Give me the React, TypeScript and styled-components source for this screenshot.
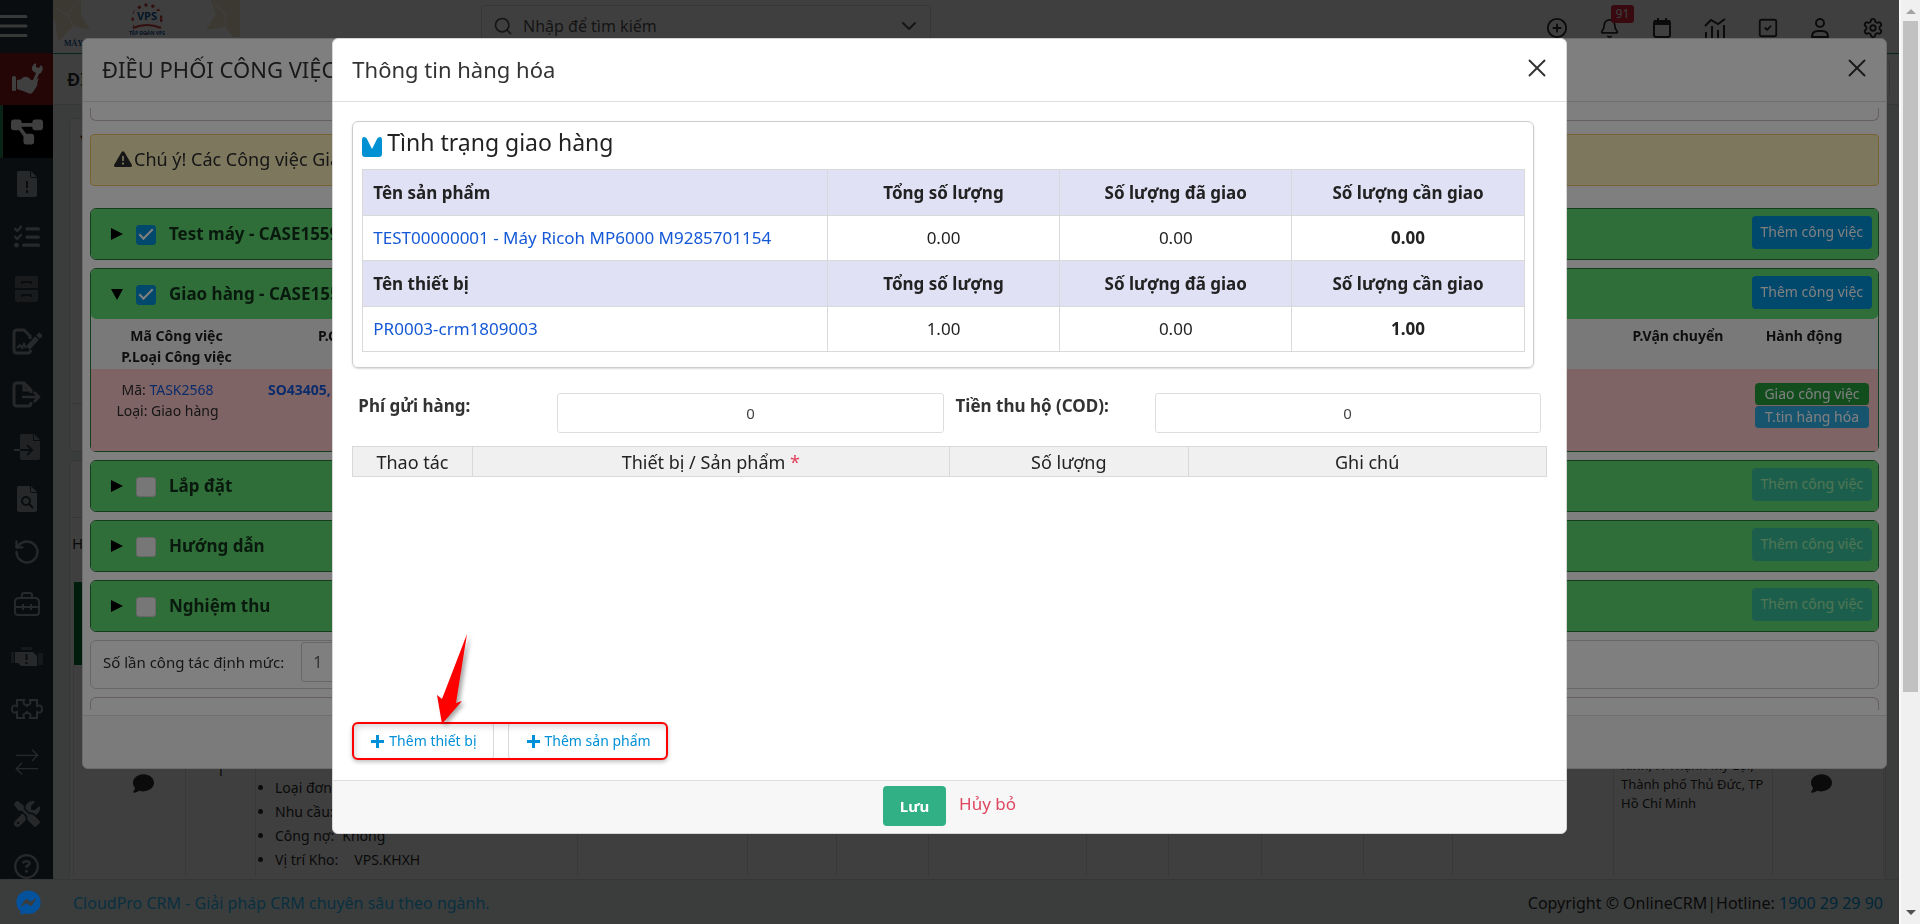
import React from "react";
import styled, { createGlobalStyle, css } from "styled-components";
import {
  ArrowRightLeft,
  Bell,
  ChevronDown,
  CirclePlus,
  RotateCcw,
  Search,
  Settings,
  SquareCheck,
  X,
} from "lucide-react";
import {
  FaComment,
  FaDiagramProject,
  FaFacebookMessenger,
  FaListCheck,
  FaRegCircleQuestion,
  FaScrewdriverWrench,
  FaTriangleExclamation,
} from "react-icons/fa6";

const GlobalStyle = createGlobalStyle`
  *, *::before, *::after { box-sizing: border-box; }
  body {
    margin: 0;
    overflow: hidden;
    background: #eff5f3;
    color: #2c2c2c;
    font-family: "Noto Sans", "Open Sans", sans-serif;
    font-size: 16px;
    line-height: 24px;
  }
  button, input { font: inherit; }
  a { color: #1558d6; text-decoration: none; }
  h1, h2, h3, p, ul { margin: 0; padding: 0; }
  svg { display: block; flex: none; }
`;

/* ---------- window frame ---------- */

const Window = styled.div`
  display: flex;
  height: 100vh;
`;

const Page = styled.div`
  flex: 1;
  min-width: 0;
  display: flex;
  flex-direction: column;
`;

const ScrollTrack = styled.div`
  position: relative;
  z-index: 30;
  width: 21px;
  display: flex;
  flex-direction: column;
  align-items: center;
  justify-content: space-between;
  padding: 9px 2px;
  background: #f0f0f0;
  border-left: 2px solid #f8f8f8;
`;

const ScrollThumb = styled.div`
  flex: 1;
  align-self: stretch;
  margin: 7px 0 218px;
  background: #c1c1c1;
`;

const ScrollArrow = styled.div<{ $down?: boolean }>`
  border: 5px solid transparent;
  ${(p) =>
    p.$down
      ? css`border-top-color: #505050; border-bottom: 0;`
      : css`border-bottom-color: #a3a3a3; border-top: 0;`}
`;

/* ---------- page behind the dialogs ---------- */

const Upper = styled.div`
  flex: 1;
  min-height: 0;
  display: flex;
`;

const Sidebar = styled.nav`
  width: 53px;
  overflow: hidden;
  background: #28343f;
`;

const SideItem = styled.button<{ $kind?: "menu" | "brand" | "active"; $short?: boolean }>`
  display: flex;
  align-items: center;
  justify-content: center;
  width: 53px;
  height: ${(p) => (p.$short ? 52 : 53)}px;
  padding: 0;
  border: 0;
  border-left: 3px solid transparent;
  border-right: 3px solid transparent;
  background: transparent;
  color: #99a0a4;
  ${(p) => p.$kind === "menu" && css`justify-content: flex-start; border: 0; padding-bottom: 1px; color: #dde0e0;`}
  ${(p) => p.$kind === "brand" && css`background: #901919; border-color: #901919; color: #fff;`}
  ${(p) => p.$kind === "active" && css`background: #000; border-color: #000; border-left-color: #2b8c5c; color: #fff;`}
`;

const PageColumn = styled.div`
  flex: 1;
  min-width: 0;
  display: flex;
  flex-direction: column;
`;

const TopBar = styled.header`
  display: flex;
  align-items: flex-start;
  height: 54px;
  background: #fff;
  border-bottom: 1px solid #1d9a6c;
`;

const LogoBox = styled.div`
  width: 190px;
`;

const SearchBox = styled.label`
  display: flex;
  align-items: center;
  gap: 10px;
  width: 450px;
  height: 42px;
  margin: 5px auto 0 238px;
  padding: 0 9px 0 11px;
  border: 1px solid #dcdcdc;
  border-radius: 4px;
  color: #555;
`;

const SearchInput = styled.input`
  flex: 1;
  min-width: 0;
  border: 0;
  padding: 0;
  background: transparent;
  color: #333;
  &::placeholder { color: #555; opacity: 1; }
`;

const TopIcons = styled.div`
  display: flex;
  width: 368px;
  padding: 16px 0 0;
`;

const TopIcon = styled.button`
  position: relative;
  display: flex;
  flex: 1;
  justify-content: center;
  align-items: center;
  height: 24px;
  padding: 0;
  border: 0;
  background: none;
  color: #2c2c2c;
`;

const Badge = styled.span`
  position: absolute;
  left: 27px;
  top: -11px;
  height: 18px;
  padding: 0 5px;
  border-radius: 3px;
  background: #e0253c;
  color: #fff;
  font-size: 12px;
  line-height: 18px;
`;

const Crumbs = styled.div`
  display: flex;
  align-items: center;
  justify-content: space-between;
  height: 51px;
  padding: 0 9px 0 14px;
  background: #fff;
  border-bottom: 1px solid #dcdcdc;
  font-size: 18px;
  font-weight: 600;
`;

const CrumbTools = styled.div`
  width: 160px;
  height: 38px;
  border: 1px solid #dcdcdc;
  border-radius: 4px;
`;

const Content = styled.main`
  flex: 1;
  min-height: 0;
  display: flex;
  flex-direction: column;
  gap: 8px;
  padding: 13px 13px 0 16px;
`;

const PageCard = styled.section<{ $grow?: boolean }>`
  display: flex;
  flex-direction: column;
  min-height: 0;
  border: 1px solid #dcdcdc;
  border-radius: 6px;
  background: #fff;
  ${(p) => (p.$grow ? css`flex: 1; border-bottom: 0; border-radius: 6px 6px 0 0;` : css`height: 334px;`)}
`;

const CardLine = styled.div<{ $h: number }>`
  height: ${(p) => p.$h}px;
  margin-left: 2px;
  padding: 7px 0 0 8px;
  border-bottom: 1px solid #dcdcdc;
`;

const JobsHead = styled.div`
  padding: 13px 2px 27px;
  font-size: 15px;
`;

const Jobs = styled.table`
  width: calc(100% - 5px);
  margin-left: 3px;
  border-collapse: collapse;
  table-layout: fixed;
  font-size: 14px;
  th { height: 83px; background: #007328; }
  td {
    height: 211px;
    padding: 91px 7px 0;
    border: solid #e0e0e0;
    border-width: 0 1px;
    vertical-align: top;
    line-height: 19px;
  }
`;

const JobStatus = styled.div<{ $last?: boolean }>`
  display: flex;
  flex-direction: column;
  align-items: center;
  gap: 4px;
  padding-right: ${(p) => (p.$last ? 22 : 0)}px;
  &::before {
    content: "";
    width: 73px;
    height: 13px;
    border-radius: 4px;
    background: #259f3c;
  }
  svg { margin-left: ${(p) => (p.$last ? 8 : 28)}px; }
`;

const JobNumber = styled.div`
  padding-top: 5px;
  text-align: center;
`;

const JobNotes = styled.ul`
  padding: 20px 0 0 12px;
  line-height: 23px;
  li + li { margin-top: 1px; }
  span { padding-left: 8px; }
  li:last-child span { padding-left: 16px; }
`;

const JobAddress = styled.p`
  font-size: 13px;
  white-space: nowrap;
`;

const Footer = styled.footer`
  display: flex;
  align-items: center;
  height: 45px;
  padding: 1px 16px 0;
  border-top: 1px solid #dcdcdc;
  background: #eff5f3;
`;

const ChatButton = styled.button`
  position: relative;
  z-index: 30;
  margin-right: 32px;
  padding: 0;
  border: 0;
  background: none;
  color: #04529b;
`;

const FooterLink = styled.a<{ $soft?: boolean }>`
  color: ${(p) => (p.$soft ? "#28c0ff" : "#0098e0")};
`;

const Copyright = styled.span`
  margin-left: auto;
`;

/* ---------- dialogs ---------- */

const Backdrop = styled.div<{ $level: 1 | 2 }>`
  position: fixed;
  inset: 0 21px 0 0;
  z-index: ${(p) => p.$level * 10};
  display: flex;
  align-items: flex-start;
  justify-content: center;
  padding: ${(p) => (p.$level === 1 ? "38px 12px 0 82px" : "38px 0 0")};
  background: rgba(0, 0, 0, 0.5);
`;

const Dialog = styled.section<{ $width: string }>`
  width: ${(p) => p.$width};
  overflow: hidden;
  border: 1px solid #d6d6d6;
  border-radius: 6px;
  background: #fff;
`;

const DialogHead = styled.header`
  display: flex;
  align-items: center;
  justify-content: space-between;
  height: 63px;
  padding: 0 14px 2px 19px;
  border-bottom: 1px solid #dedede;
`;

const DialogTitle = styled.h2`
  font-size: 22px;
  line-height: 32px;
  font-weight: 400;
  white-space: nowrap;
  color: #333;
`;

const CloseButton = styled.button`
  padding: 0 0 3px;
  border: 0;
  background: none;
  color: #333;
`;

const DialogFoot = styled.footer`
  display: flex;
  justify-content: center;
  gap: 13px;
  height: 53px;
  padding: 5px 0 0;
  border-top: 1px solid #dedede;
  background: #f7f7f7;
`;

const PlanBody = styled.div`
  display: flex;
  flex-direction: column;
  gap: 8px;
  padding: 6px 7px 5px;
`;

const Stub = styled.div<{ $end?: boolean }>`
  height: 13px;
  border: 1px solid #cdbfc2;
  ${(p) =>
    p.$end
      ? css`border-bottom: 0; border-radius: 6px 6px 0 0;`
      : css`border-top: 0; border-radius: 0 0 6px 6px; margin-bottom: 5px;`}
`;

const Notice = styled.p`
  display: flex;
  align-items: center;
  gap: 2px;
  height: 52px;
  margin-bottom: 14px;
  padding: 0 23px 2px;
  border: 1px solid #f3c565;
  border-radius: 4px;
  background: #fbefbd;
  font-size: 18px;
  white-space: nowrap;
`;

const Group = styled.section`
  border: 1px solid #2b7c3e;
  border-radius: 6px;
  background: #fff;
`;

const GroupHead = styled.header`
  display: flex;
  align-items: center;
  height: 50px;
  padding: 0 6px 0 20px;
  border-radius: 5px;
  background: #5edc70;
`;

const Caret = styled.span<{ $open?: boolean }>`
  width: 25px;
  &::before {
    content: "";
    display: block;
    width: 0;
    height: 0;
    border: 6px solid transparent;
    ${(p) =>
      p.$open
        ? css`border-top: 11px solid #000; border-bottom: 0;`
        : css`border-left: 12px solid #000; border-right: 0;`}
  }
`;

const GroupLabel = styled.label`
  display: flex;
  align-items: center;
  gap: 13px;
  color: #12331a;
  font-size: 17px;
  font-weight: 700;
  white-space: nowrap;
`;

const Tick = styled.input`
  appearance: none;
  width: 20px;
  height: 20px;
  margin: 2px 0 0;
  border: 1px solid #cfcfcf;
  border-radius: 3px;
  background: #efefef;
  &:checked {
    border-color: #0090d8;
    background: #0090d8;
  }
  &:checked::before {
    content: "";
    display: block;
    width: 14px;
    height: 7px;
    margin: 3px 0 0 2px;
    border: solid #fff;
    border-width: 0 0 2px 2px;
    transform: rotate(-45deg);
  }
`;

const AddTask = styled.button`
  height: 33px;
  margin: 0 0 4px auto;
  padding: 0 9px;
  border: 0;
  border-radius: 4px;
  background: #0090d8;
  color: #fff;
  font-size: 14px;
  &:disabled { opacity: 0.4; }
`;

const Tasks = styled.table`
  width: 100%;
  border-collapse: collapse;
  table-layout: fixed;
  font-size: 14px;
  line-height: 21px;
  text-align: center;
  th {
    height: 50px;
    padding: 6px 0 0;
    color: #1c1c1c;
    background: #f3f3f3;
    font-weight: 700;
    vertical-align: top;
  }
  td {
    height: 82px;
    padding: 10px 18px 0 0;
    background: #ffc8ca;
    vertical-align: top;
  }
  th:nth-child(2) { padding-left: 56px; text-align: left; }
  td:nth-child(2) { padding-left: 6px; text-align: left; }
  td:last-child { padding: 14px 0 0 16px; }
`;

const RowAction = styled.button<{ $tone: string }>`
  display: block;
  width: 114px;
  height: 23px;
  margin: 0 auto;
  padding: 0;
  border: 0;
  border-bottom: 1px solid #ffc8ca;
  border-radius: 4px;
  background: ${(p) => p.$tone};
  color: #fff;
  font-size: 14px;
  line-height: 22px;
`;

const Quota = styled.label`
  display: flex;
  align-items: center;
  gap: 17px;
  height: 49px;
  padding: 0 12px 5px;
  border: 1px solid #cfcfcf;
  border-radius: 6px;
  font-size: 15px;
`;

const QuotaInput = styled.input`
  width: 300px;
  height: 40px;
  padding: 0 11px;
  border: 1px solid #cfcfcf;
  border-radius: 3px;
  background: #fff;
  color: #666;
  font-size: 16px;
`;

/* ---------- goods dialog ---------- */

const GoodsBody = styled.div`
  padding: 19px 19px 20px;
`;

const StatusCard = styled.section`
  margin-right: 13px;
  padding: 0 8px 15px 9px;
  border: 1px solid #ccc;
  border-radius: 6px;
  box-shadow: 0 1px 2px rgba(0, 0, 0, 0.15);
`;

const StatusTitle = styled.h3`
  display: flex;
  align-items: center;
  gap: 5px;
  height: 47px;
  padding-bottom: 7px;
  font-size: 23px;
  font-weight: 400;
  color: #222;
  svg { margin-top: 9px; }
`;

const Grid = styled.table<{ $dense?: boolean }>`
  width: 100%;
  border-collapse: collapse;
  table-layout: fixed;
  text-align: center;
  color: #222;
  font-size: 17px;
  th, td {
    height: 45px;
    padding: 0 10px;
    border: 1px solid #d9d9d9;
    font-weight: 400;
  }
  th { height: 46px; background: #e1e1f6; font-weight: 700; }
  td:last-child { font-weight: 700; }
  th:first-child, td:first-child { text-align: left; }
  ${(p) =>
    p.$dense &&
    css`
      font-size: 18px;
      && th { height: 30px; background: #f0f0f0; font-weight: 400; text-align: center; }
    `}
`;

const Fees = styled.div`
  display: grid;
  grid-template-columns: 1fr 2fr 1fr 2fr;
  margin: 25px 0 13px;
`;

const FeeLabel = styled.label`
  padding: 1px 6px;
  font-size: 17px;
  font-weight: 700;
  color: #333;
  white-space: nowrap;
`;

const FeeCell = styled.div`
  padding: 0 6px;
`;

const FeeInput = styled.input`
  display: block;
  width: 100%;
  height: 40px;
  border: 1px solid #ddd;
  border-radius: 3px;
  color: #444;
  font-size: 15px;
  text-align: center;
`;

const Required = styled.span`
  color: #e0405a;
`;

const Lines = styled.div`
  min-height: 276px;
`;

const AddButtons = styled.div`
  position: relative;
  display: flex;
  gap: 14px;
  width: max-content;
`;

const AddButton = styled.button`
  display: flex;
  align-items: center;
  gap: 5px;
  height: 38px;
  padding: 0 16px 0 18px;
  border: 1px solid #d9d9d9;
  border-radius: 4px;
  background: #fff;
  color: #0090d8;
  font-size: 14px;
`;

const Highlight = styled.div`
  position: absolute;
  inset: 0;
  border: 2px solid #f00;
  border-radius: 6px;
  box-shadow: 0 2px 4px rgba(0, 0, 0, 0.25), inset 2px 3px 6px rgba(0, 0, 0, 0.15);
  pointer-events: none;
`;

const Pointer = styled.svg`
  position: absolute;
  left: 80px;
  bottom: 36px;
  filter: drop-shadow(3px 2px 2px rgba(0, 0, 0, 0.35));
`;

const SaveButton = styled.button`
  width: 63px;
  height: 40px;
  padding: 0;
  border: 0;
  border-radius: 4px;
  background: #31b085;
  color: #fff;
  font-size: 15px;
  font-weight: 700;
`;

const CancelButton = styled.button`
  align-self: flex-start;
  padding: 6px 0;
  border: 0;
  background: none;
  color: #df4660;
  font-size: 17px;
`;

/* ---------- drawings ---------- */

const MenuIcon = () => (
  <svg width="28" height="24" viewBox="0 0 28 24" stroke="currentColor" strokeWidth="3" strokeLinecap="round">
    <path d="M0 2.500H26M0 12H26M0 21.500H26" />
  </svg>
);

const HandWrenchIcon = () => (
  <svg width="32" height="32" viewBox="0 0 32 32" fill="currentColor">
    <rect x="1" y="13" width="4" height="15" rx="1.500" />
    <path d="M6 17Q10 17 12 14.500Q15 13 18 15L20 17H25L28 15Q26 19 26 23L22 29Q20 32 17 30L12 28L6 26Z" />
    <path d="M22 17L25 10Q20 8 21 4Q22 1 25 0L25 4L28 5L30 2Q33 5 31 8Q30 11 28 11L25 18Z" />
  </svg>
);

const FileBase = ({ children }: { children: React.ReactNode }) => (
  <svg width="20" height="26" viewBox="0 0 20 26">
    <path d="M2 0H13V5Q13 7 15 7H20V24Q20 26 18 26H2Q0 26 0 24V2Q0 0 2 0ZM14 0L20 6H14Z" fill="currentColor" />
    <g fill="none" stroke="#28343f" strokeWidth="2">
      {children}
    </g>
  </svg>
);

const CabinetIcon = () => (
  <svg width="23" height="26" viewBox="0 0 23 26">
    <path d="M2 0H21Q23 0 23 2V12H0V2Q0 0 2 0ZM0 14H23V24Q23 26 21 26H2Q0 26 0 24Z" fill="currentColor" opacity=".5" />
    <path d="M7 8V6H16V8M7 21V19H16V21" fill="none" stroke="#28343f" strokeWidth="2" />
  </svg>
);

const SignIcon = () => (
  <svg width="30" height="27" viewBox="0 0 30 27" fill="none" stroke="currentColor" strokeWidth="3">
    <path d="M19 22Q18 25 16 25H5Q2 25 2 22V5Q2 2 5 2H12L18 8V11" />
    <path d="M5 20L8 17L10 20L12 16L14 20" strokeWidth="2" />
    <path d="M16 20L25 10" strokeWidth="5" />
    <path d="M26 9L29 6" strokeWidth="5" />
  </svg>
);

const ExportIcon = () => (
  <svg width="30" height="27" viewBox="0 0 30 27" fill="none" stroke="currentColor" strokeWidth="3">
    <path d="M19 21V22Q19 25 16 25H5Q2 25 2 22V5Q2 2 5 2H12L19 9V12M12 2V9H19" />
    <path d="M10 16H27M22 11L27 16L22 21" strokeWidth="2.500" />
  </svg>
);

const ImportIcon = () => (
  <svg width="26" height="26" viewBox="0 0 26 26">
    <path d="M8 0H19V7H26V24Q26 26 24 26H8Q6 26 6 24V2Q6 0 8 0ZM20 0L26 6H20Z" fill="currentColor" opacity=".8" />
    <path d="M6 16H18M13 11L18 16L13 21" fill="none" stroke="#28343f" strokeWidth="2" />
    <path d="M0 16H6" stroke="currentColor" strokeWidth="2" />
  </svg>
);

const ToolboxIcon = () => (
  <svg width="26" height="24" viewBox="0 0 26 24" fill="none" stroke="currentColor" strokeWidth="2">
    <path d="M1 10Q1 6 5 6H21Q25 6 25 10V20Q25 23 22 23H4Q1 23 1 20ZM8 6V3Q8 1 10 1H16Q18 1 18 3V6M1 15H25M9 12V18M17 12V18" />
  </svg>
);

const EngineIcon = () => (
  <svg width="32" height="20" viewBox="0 0 32 20">
    <path d="M10 0H21V3H10ZM0 5H3V16H0ZM27 6H32V18H27Z" fill="currentColor" opacity=".45" />
    <path d="M4 5H22L26 9V19H10L7 16H4Z" fill="currentColor" />
    <path d="M15.500 7V13M15.500 15V17" stroke="#28343f" strokeWidth="2" />
  </svg>
);

const PuzzleIcon = () => (
  <svg width="32" height="20" viewBox="0 0 32 20" fill="none" stroke="currentColor" strokeWidth="2">
    <path d="M6 1H13Q11 6 16 6Q21 6 19 1H26V7Q31 5 31 10Q31 15 26 13V19H19Q21 14 16 14Q11 14 13 19H6V13Q1 15 1 10Q1 5 6 7Z" />
    <path d="M16 6V8M16 12V14" />
  </svg>
);

const CalendarIcon = () => (
  <svg width="18" height="20" viewBox="0 0 18 20" fill="none" stroke="currentColor" strokeWidth="2">
    <rect x="1" y="3" width="16" height="16" rx="2" />
    <path d="M1 4.500H17" strokeWidth="5" />
    <path d="M5 0V4M13 0V4" />
  </svg>
);

const ChartIcon = () => (
  <svg width="22" height="20" viewBox="0 0 22 20" fill="none" stroke="currentColor" strokeWidth="2">
    <path d="M1 8L7 2L14 6L21 1M2 20V14M8 20V8M14 20V12M20 20V7" />
  </svg>
);

const PersonIcon = () => (
  <svg width="18" height="20" viewBox="0 0 18 20" fill="none" stroke="currentColor" strokeWidth="2">
    <circle cx="9" cy="5" r="4" />
    <path d="M1 19Q1 13 7 13H11Q17 13 17 19Z" />
  </svg>
);

const PlusIcon = () => (
  <svg width="13" height="13" viewBox="0 0 13 13" stroke="currentColor" strokeWidth="3">
    <path d="M0 6.500H13M6.500 0V13" />
  </svg>
);

const Logo = () => (
  <svg width="190" height="51" viewBox="0 0 190 51">
    <path d="M0 0H28V14L37 30L20 26L5 42L2 20L0 22ZM158 0H187V37H180L172 27L153 30L163 14L158 2Z" fill="#f0e6cb" />
    <path d="M28 0L14 14L20 26M14 14L2 8M160 2L172 14L172 27" fill="none" stroke="#fff" strokeWidth="1" />
    <circle cx="94" cy="19" r="14" fill="none" stroke="#cc3a3a" strokeWidth="3" strokeDasharray="3 4" />
    <rect x="81" y="11" width="26" height="22" fill="#fff" />
    <text x="94" y="20" fill="#145a9c" fontSize="11" fontWeight="700" textAnchor="middle" fontFamily="Noto Sans, sans-serif">VPS</text>
    <path d="M80 28Q94 22 108 28" fill="none" stroke="#cc3a3a" strokeWidth="2" />
    <text x="94" y="35" fill="#145a9c" fontSize="5" fontWeight="700" textAnchor="middle" fontFamily="Noto Sans, sans-serif">TẬP ĐOÀN VPS</text>
    <text x="11" y="46" fill="#145a9c" fontSize="8" fontWeight="700" fontFamily="Liberation Serif, serif">MÁY</text>
  </svg>
);

const StatusIcon = () => (
  <svg width="20" height="20" viewBox="0 0 20 20">
    <path d="M2 0Q4 0 5 2L10 12L15 2Q16 0 18 0Q20 0 20 3V17Q20 20 17 20H3Q0 20 0 17V3Q0 0 2 0Z" fill="#0090d4" />
  </svg>
);

const sideIcons: [string, React.ReactNode][] = [
  ["Cảnh báo", <FileBase><path d="M10 10V17M10 19V22" /></FileBase>],
  ["Danh sách", <FaListCheck size={26} />],
  ["Lưu trữ", <CabinetIcon />],
  ["Ký", <SignIcon />],
  ["Xuất", <ExportIcon />],
  ["Nhập", <ImportIcon />],
  ["Tìm", <FileBase><circle cx="9" cy="15" r="4" /><path d="M12 18L16 22" /></FileBase>],
  ["Hoàn lại", <RotateCcw size={28} strokeWidth={2} />],
  ["Công cụ", <ToolboxIcon />],
  ["Động cơ", <EngineIcon />],
  ["Tiện ích", <PuzzleIcon />],
  ["Chuyển", <ArrowRightLeft size={32} strokeWidth={1} />],
  ["Cài đặt", <FaScrewdriverWrench size={26} />],
  ["Trợ giúp", <FaRegCircleQuestion size={25} />],
];

const jobColumns = [112, 70, 322, 170, 89, 92, 158, 82, 93, 102, 89, 161, 159, 111];

const goods = [
  { head: "Tên sản phẩm", name: "TEST00000001 - Máy Ricoh MP6000 M9285701154", total: "0.00", done: "0.00", left: "0.00" },
  { head: "Tên thiết bị", name: "PR0003-crm1809003", total: "1.00", done: "0.00", left: "1.00" },
];

function TaskGroup({ title, checked, children }: { title: string; checked?: boolean; children?: React.ReactNode }) {
  return (
    <Group>
      <GroupHead>
        <Caret $open={!!children} />
        <GroupLabel>
          <Tick type="checkbox" defaultChecked={checked} />
          {title}
        </GroupLabel>
        <AddTask disabled={!checked}>Thêm công việc</AddTask>
      </GroupHead>
      {children}
    </Group>
  );
}

function BackgroundPage() {
  return (
    <Page>
      <Upper>
        <Sidebar>
          <SideItem $kind="menu" aria-label="Menu"><MenuIcon /></SideItem>
          <SideItem $kind="brand" $short aria-label="Dịch vụ"><HandWrenchIcon /></SideItem>
          <SideItem $kind="active" aria-label="Điều phối"><FaDiagramProject size={32} /></SideItem>
          {sideIcons.map(([name, icon], i) => (
            <SideItem key={name} $short={i % 2 === 0} aria-label={name}>{icon}</SideItem>
          ))}
        </Sidebar>
        <PageColumn>
          <TopBar>
            <LogoBox><Logo /></LogoBox>
            <SearchBox>
              <Search size={20} strokeWidth={2} />
              <SearchInput placeholder="Nhập để tìm kiếm" aria-label="Tìm kiếm" />
              <ChevronDown size={24} strokeWidth={2} />
            </SearchBox>
            <TopIcons>
              <TopIcon aria-label="Thêm"><CirclePlus size={22} /></TopIcon>
              <TopIcon aria-label="Thông báo"><Bell size={21} /><Badge>91</Badge></TopIcon>
              <TopIcon aria-label="Lịch"><CalendarIcon /></TopIcon>
              <TopIcon aria-label="Báo cáo"><ChartIcon /></TopIcon>
              <TopIcon aria-label="Việc cần làm"><SquareCheck size={22} /></TopIcon>
              <TopIcon aria-label="Tài khoản"><PersonIcon /></TopIcon>
              <TopIcon aria-label="Cài đặt"><Settings size={22} /></TopIcon>
            </TopIcons>
          </TopBar>
          <Crumbs>ĐI<CrumbTools /></Crumbs>
          <Content>
            <PageCard><CardLine $h={285}>▾</CardLine></PageCard>
            <PageCard $grow>
              <CardLine $h={57} />
              <JobsHead>H</JobsHead>
              <Jobs>
                <colgroup>
                  {jobColumns.map((w, i) => <col key={i} style={{ width: w }} />)}
                </colgroup>
                <thead><tr>{jobColumns.map((_, i) => <th key={i} />)}</tr></thead>
                <tbody>
                  <tr>
                    <td><JobStatus><FaComment size={21} /></JobStatus></td>
                    <td><JobNumber>1</JobNumber></td>
                    <td>
                      <JobNotes>
                        <li>Loại đơn</li>
                        <li>Nhu cầu:</li>
                        <li>Công nợ:<span>Không</span></li>
                        <li>Vị trí Kho:<span>VPS.KHXH</span></li>
                      </JobNotes>
                    </td>
                    {jobColumns.slice(3, 12).map((_, i) => <td key={i} />)}
                    <td>
                      <JobAddress>
                        Kinh, P. Thạnh Mỹ Lợi,<br />Thành phố Thủ Đức, TP<br />Hồ Chí Minh
                      </JobAddress>
                    </td>
                    <td><JobStatus $last><FaComment size={21} /></JobStatus></td>
                  </tr>
                </tbody>
              </Jobs>
            </PageCard>
          </Content>
        </PageColumn>
      </Upper>
      <Footer>
        <ChatButton aria-label="Messenger"><FaFacebookMessenger size={25} /></ChatButton>
        <FooterLink href="#" $soft>CloudPro CRM - Giải pháp CRM chuyên sâu theo ngành.</FooterLink>
        <Copyright>
          Copyright © OnlineCRM|Hotline: <FooterLink href="#">1900 29 29 90</FooterLink>
        </Copyright>
      </Footer>
    </Page>
  );
}

function PlanDialog() {
  return (
    <Dialog $width="100%" role="dialog" aria-label="Điều phối công việc">
      <DialogHead>
        <DialogTitle>ĐIỀU PHỐI CÔNG VIỆC</DialogTitle>
        <CloseButton aria-label="Đóng"><X size={30} strokeWidth={1.5} /></CloseButton>
      </DialogHead>
      <PlanBody>
        <Stub />
        <Notice><FaTriangleExclamation size={18} />Chú ý! Các Công việc Giao</Notice>
        <TaskGroup title="Test máy - CASE1559" checked />
        <TaskGroup title="Giao hàng - CASE1559" checked>
          <Tasks>
            <colgroup>
              <col style={{ width: 171 }} />
              <col style={{ width: 170 }} />
              <col />
              <col style={{ width: 104 }} />
              <col style={{ width: 148 }} />
            </colgroup>
            <thead>
              <tr>
                <th>Mã Công việc<br />P.Loại Công việc</th>
                <th>P.C</th>
                <th />
                <th>P.Vận chuyển</th>
                <th>Hành động</th>
              </tr>
            </thead>
            <tbody>
              <tr>
                <td>Mã: <a href="#">TASK2568</a><br />Loại: Giao hàng</td>
                <td><a href="#"><b>SO43405,</b></a></td>
                <td />
                <td />
                <td>
                  <RowAction $tone="#249a3a">Giao công việc</RowAction>
                  <RowAction $tone="#2fa8dc">T.tin hàng hóa</RowAction>
                </td>
              </tr>
            </tbody>
          </Tasks>
        </TaskGroup>
        <TaskGroup title="Lắp đặt" />
        <TaskGroup title="Hướng dẫn" />
        <TaskGroup title="Nghiệm thu" />
        <Quota>
          Số lần công tác định mức:
          <QuotaInput defaultValue="1" />
        </Quota>
        <Stub $end />
      </PlanBody>
      <DialogFoot />
    </Dialog>
  );
}

function GoodsDialog() {
  return (
    <Dialog $width="65%" role="dialog" aria-label="Thông tin hàng hóa">
      <DialogHead>
        <DialogTitle>Thông tin hàng hóa</DialogTitle>
        <CloseButton aria-label="Đóng"><X size={30} strokeWidth={1.5} /></CloseButton>
      </DialogHead>
      <GoodsBody>
        <StatusCard>
          <StatusTitle><StatusIcon />Tình trạng giao hàng</StatusTitle>
          <Grid>
            <colgroup>
              <col style={{ width: "40%" }} />
              <col /><col /><col />
            </colgroup>
            {goods.map((g) => (
              <tbody key={g.head}>
                <tr>
                  <th>{g.head}</th>
                  <th>Tổng số lượng</th>
                  <th>Số lượng đã giao</th>
                  <th>Số lượng cần giao</th>
                </tr>
                <tr>
                  <td><a href="#">{g.name}</a></td>
                  <td>{g.total}</td>
                  <td>{g.done}</td>
                  <td>{g.left}</td>
                </tr>
              </tbody>
            ))}
          </Grid>
        </StatusCard>
        <Fees>
          <FeeLabel htmlFor="fee">Phí gửi hàng:</FeeLabel>
          <FeeCell><FeeInput id="fee" defaultValue="0" /></FeeCell>
          <FeeLabel htmlFor="cod">Tiền thu hộ (COD):</FeeLabel>
          <FeeCell><FeeInput id="cod" defaultValue="0" /></FeeCell>
        </Fees>
        <Lines>
          <Grid $dense>
            <colgroup>
              <col style={{ width: "10%" }} />
              <col style={{ width: "40%" }} />
              <col style={{ width: "20%" }} />
              <col style={{ width: "30%" }} />
            </colgroup>
            <thead>
              <tr>
                <th>Thao tác</th>
                <th>Thiết bị / Sản phẩm <Required>*</Required></th>
                <th>Số lượng</th>
                <th>Ghi chú</th>
              </tr>
            </thead>
          </Grid>
        </Lines>
        <AddButtons>
          <AddButton><PlusIcon />Thêm thiết bị</AddButton>
          <AddButton><PlusIcon />Thêm sản phẩm</AddButton>
          <Highlight />
          <Pointer width="40" height="90" viewBox="0 0 40 90">
            <path d="M35 0L24 69L30 67L10 90L5 61L10 65Z" fill="#f00" />
          </Pointer>
        </AddButtons>
      </GoodsBody>
      <DialogFoot>
        <SaveButton>Lưu</SaveButton>
        <CancelButton>Hủy bỏ</CancelButton>
      </DialogFoot>
    </Dialog>
  );
}

export default function App() {
  return (
    <>
      <GlobalStyle />
      <Window>
        <BackgroundPage />
        <Backdrop $level={1}><PlanDialog /></Backdrop>
        <Backdrop $level={2}><GoodsDialog /></Backdrop>
        <ScrollTrack>
          <ScrollArrow />
          <ScrollThumb />
          <ScrollArrow $down />
        </ScrollTrack>
      </Window>
    </>
  );
}
